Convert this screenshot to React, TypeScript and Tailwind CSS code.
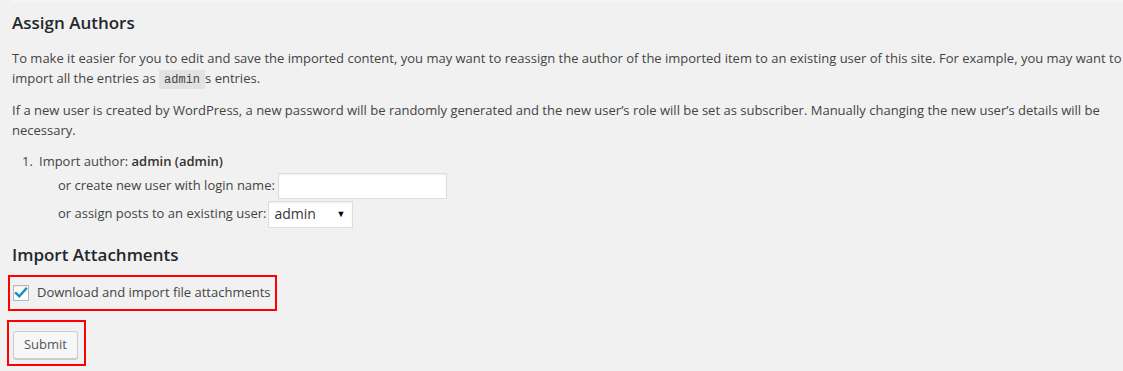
export default function App() {
  return (
    <div className="w-[1123px] h-[371px] overflow-hidden bg-[#f1f1f1] text-[13px] leading-[19.5px] text-[#444] font-['Open_Sans',sans-serif]">
      <div className="ml-[13px] h-[2px] bg-[#f6f6f6]" />
      <div className="pl-[12px] w-[1150px]">
        <h3 className="mt-[10px] text-[17px] leading-[22px] font-semibold text-[#23282d]">Assign Authors</h3>
        <p className="mt-[15px]">
          To make it easier for you to edit and save the imported content, you may want to reassign the author of the imported item to an existing user of this site. For example, you may want to import all the entries as{' '}
          <code className="bg-[#e2e2e2] px-[5px] pt-[3px] pb-[2px] font-['Liberation_Mono',monospace] text-[12px] text-[#444]">admin</code>s entries.
        </p>
        <p className="mt-[11px]">
          If a new user is created by WordPress, a new password will be randomly generated and the new user’s role will be set as subscriber. Manually changing the new user’s details will be necessary.
        </p>
        <ol className="mt-[12px] pl-[10px]">
          <li className="flex flex-col">
            <div className="flex">
              <span className="w-[17px]">1.</span>
              <span>
                Import author: <strong className="font-semibold text-[#333]">admin (admin)</strong>
              </span>
            </div>
            <div className="ml-[36px] flex flex-col gap-[2px]">
              <label className="flex items-center h-[26px] mt-[1px]">
                or create new user with login name:
                <input
                  type="text"
                  className="ml-[3px] w-[169px] h-[26px] bg-white border border-[#ddd] shadow-[inset_0_1px_2px_rgba(0,0,0,0.07)] outline-none"
                />
              </label>
              <label className="flex items-center h-[27px]">
                or assign posts to an existing user:
                <span className="ml-[1px] w-[85px] h-[27px] bg-white border border-[#ddd] shadow-[inset_0_1px_2px_rgba(0,0,0,0.07)] flex items-center justify-between pl-[6px] pr-[6px] text-[14px] text-[#32373c]">
                  admin
                  <span className="text-[9px] text-black">▼</span>
                </span>
              </label>
            </div>
          </li>
        </ol>
        <h3 className="mt-[16px] text-[17px] leading-[22px] font-semibold text-[#23282d]">Import Attachments</h3>
        <div className="mt-[9px] -ml-[4px] w-[269px] h-[36px] border-2 border-[#f00] flex items-center pl-[3px]">
          <span className="w-[16px] h-[16px] bg-white border border-[#b4b9be] shadow-[inset_0_1px_2px_rgba(0,0,0,0.1)] flex items-center justify-center">
            <svg width="14" height="14" viewBox="0 0 14 14">
              <path d="M2 7.2 L5.3 10.2 L12 2.8" fill="none" stroke="#1e8cbe" strokeWidth="2.4" strokeLinecap="square" />
            </svg>
          </span>
          <label className="ml-[8px] text-[#444]">Download and import file attachments</label>
        </div>
        <div className="mt-[9px] -ml-[5px] w-[79px] h-[46px] border-2 border-[#f00] pl-[4px] pt-[9px]">
          <button className="w-[65px] h-[28px] rounded-[3px] bg-[#f7f7f7] border border-[#ccc] shadow-[0_1px_0_#ccc] text-[#555] text-[13px]">
            Submit
          </button>
        </div>
      </div>
    </div>
  )
}
